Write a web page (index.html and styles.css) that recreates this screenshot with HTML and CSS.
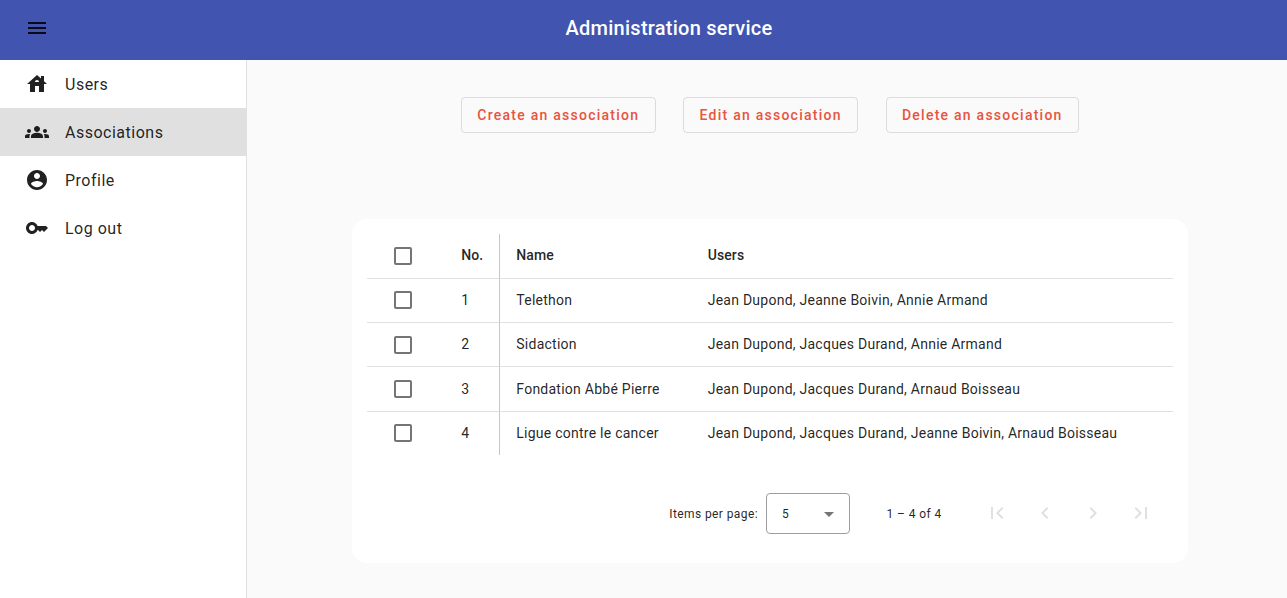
FILE: index.html
```
<!DOCTYPE html>
<html lang="en">
<head>
<meta charset="utf-8">
<title>Administration service</title>
<link rel="stylesheet" href="styles.css">
</head>
<body>
<header class="toolbar">
  <button class="menu-button" aria-label="Menu"><svg class="icon" viewBox="0 0 24 24"><path d="M3 18h18v-2H3v2zm0-5h18v-2H3v2zm0-7v2h18V6H3z"/></svg></button>
  <h1 class="title">Administration service</h1>
</header>
<div class="layout">
  <nav class="sidebar">
    <a class="nav-item"><svg class="icon" viewBox="0 0 24 24"><path d="M19 9.3V4h-3v2.6L12 3 2 12h3v8h5v-6h4v6h5v-8h3l-3-2.7zm-9 .7c0-1.1.9-2 2-2s2 .9 2 2h-4z"/></svg><span>Users</span></a>
    <a class="nav-item active"><svg class="icon" viewBox="0 0 24 24"><path d="M12 12.75c1.63 0 3.07.39 4.24.9 1.08.48 1.76 1.56 1.76 2.73V18H6v-1.61c0-1.18.68-2.26 1.76-2.73 1.17-.52 2.61-.91 4.24-.91zM4 13c1.1 0 2-.9 2-2s-.9-2-2-2-2 .9-2 2 .9 2 2 2zm1.13 1.1c-.37-.06-.74-.1-1.13-.1-.99 0-1.93.21-2.78.58C.48 14.9 0 15.62 0 16.43V18h4.5v-1.61c0-.83.23-1.61.63-2.29zM20 13c1.1 0 2-.9 2-2s-.9-2-2-2-2 .9-2 2 .9 2 2 2zm4 3.43c0-.81-.48-1.53-1.22-1.85-.85-.37-1.79-.58-2.78-.58-.39 0-.76.04-1.13.1.4.68.63 1.46.63 2.29V18H24v-1.57zM12 6c1.66 0 3 1.34 3 3s-1.34 3-3 3-3-1.34-3-3 1.34-3 3-3z"/></svg><span>Associations</span></a>
    <a class="nav-item"><svg class="icon" viewBox="0 0 24 24"><path d="M12 2C6.48 2 2 6.48 2 12s4.48 10 10 10 10-4.48 10-10S17.52 2 12 2zm0 3c1.66 0 3 1.34 3 3s-1.34 3-3 3-3-1.34-3-3 1.34-3 3-3zm0 14.2c-2.5 0-4.71-1.28-6-3.22.03-1.99 4-3.08 6-3.08 1.99 0 5.97 1.09 6 3.08-1.29 1.94-3.5 3.22-6 3.22z"/></svg><span>Profile</span></a>
    <a class="nav-item"><svg class="icon" viewBox="0 0 24 24"><path d="M21 10h-8.35C11.83 7.67 9.61 6 7 6c-3.31 0-6 2.69-6 6s2.69 6 6 6c2.61 0 4.83-1.67 5.65-4H13l2 2 2-2 2 2 4-4.04L21 10zM7 15c-1.65 0-3-1.35-3-3s1.35-3 3-3 3 1.35 3 3-1.35 3-3 3z"/></svg><span>Log out</span></a>
  </nav>
  <main class="content">
    <div class="actions">
      <button class="action">Create an association</button>
      <button class="action">Edit an association</button>
      <button class="action">Delete an association</button>
    </div>
    <section class="card">
      <table class="table">
        <thead>
          <tr><th class="col-check"><span class="checkbox"></span></th><th class="col-no">No.</th><th class="col-name">Name</th><th>Users</th></tr>
        </thead>
        <tbody>
          <tr><td class="col-check"><span class="checkbox"></span></td><td class="col-no">1</td><td>Telethon</td><td>Jean Dupond, Jeanne Boivin, Annie Armand</td></tr>
          <tr><td class="col-check"><span class="checkbox"></span></td><td class="col-no">2</td><td>Sidaction</td><td>Jean Dupond, Jacques Durand, Annie Armand</td></tr>
          <tr><td class="col-check"><span class="checkbox"></span></td><td class="col-no">3</td><td>Fondation Abbé Pierre</td><td>Jean Dupond, Jacques Durand, Arnaud Boisseau</td></tr>
          <tr><td class="col-check"><span class="checkbox"></span></td><td class="col-no">4</td><td>Ligue contre le cancer</td><td>Jean Dupond, Jacques Durand, Jeanne Boivin, Arnaud Boisseau</td></tr>
        </tbody>
      </table>
      <div class="paginator">
        <span class="label">Items per page:</span>
        <div class="select"><span>5</span><svg class="caret" viewBox="0 0 10 5"><path d="M0 0h10L5 5z"/></svg></div>
        <span class="label range">1 – 4 of 4</span>
        <div class="pager">
          <button class="page-button" aria-label="First page"><svg class="icon" viewBox="0 0 24 24"><path d="M18.41 16.59L13.82 12l4.59-4.59L17 6l-6 6 6 6zM6 6h2v12H6z"/></svg></button>
          <button class="page-button" aria-label="Previous page"><svg class="icon" viewBox="0 0 24 24"><path d="M15.41 7.41L14 6l-6 6 6 6 1.41-1.41L10.83 12z"/></svg></button>
          <button class="page-button" aria-label="Next page"><svg class="icon" viewBox="0 0 24 24"><path d="M10 6L8.59 7.41 13.17 12l-4.58 4.59L10 18l6-6z"/></svg></button>
          <button class="page-button" aria-label="Last page"><svg class="icon" viewBox="0 0 24 24"><path d="M5.59 7.41L10.18 12l-4.59 4.59L7 18l6-6-6-6zM16 6h2v12h-2z"/></svg></button>
        </div>
      </div>
    </section>
  </main>
</div>
</body>
</html>
```

FILE: styles.css
```
* { box-sizing: border-box; }
body {
  margin: 0;
  height: 598px;
  display: flex;
  flex-direction: column;
  overflow: hidden;
  background: #fafafa;
  color: rgba(0, 0, 0, .87);
  font-family: Roboto, sans-serif;
}
button { font-family: inherit; background: none; border: 0; padding: 0; margin: 0; }
.icon { display: block; width: 24px; height: 24px; fill: currentColor; }
.toolbar {
  display: flex;
  align-items: center;
  height: 60px;
  flex: none;
  padding: 0 0 4px 13px;
  background: #4054b0;
}
.menu-button {
  display: grid;
  place-items: center;
  width: 48px;
  height: 48px;
  color: rgba(0, 0, 0, .87);
}
.title {
  flex: 1;
  margin: 0;
  padding-right: 10px;
  text-align: center;
  color: #fff;
  font-size: 20px;
  font-weight: 500;
  line-height: 32px;
  letter-spacing: .25px;
}
.layout { display: flex; flex: 1; }
.sidebar { width: 247px; flex: none; background: #fff; border-right: 1px solid #e0e0e0; }
.nav-item {
  display: flex;
  align-items: center;
  gap: 16px;
  height: 48px;
  padding-left: 25px;
  font-size: 16px;
  letter-spacing: .5px;
}
.active { background: #e0e0e0; }
.content {
  flex: 1;
  display: flex;
  flex-direction: column;
  align-items: center;
  padding: 37px 0 0 6px;
}
.actions { display: flex; gap: 27.6px; }
.action {
  height: 36px;
  padding: 0 15.3px;
  border: 1px solid rgba(0, 0, 0, .12);
  border-radius: 4px;
  color: #e8543f;
  font-size: 14px;
  font-weight: 500;
  letter-spacing: 1.25px;
}
.card {
  width: 836px;
  height: 344px;
  margin-top: 86px;
  padding: 15px;
  border-radius: 15px;
  background: #fff;
}
.table {
  width: 100%;
  table-layout: fixed;
  border-collapse: separate;
  border-spacing: 0;
  font-size: 14px;
  line-height: 20px;
  letter-spacing: .25px;
}
tr { height: 44.3px; }
thead tr { height: 44.7px; }
tbody tr:last-child { height: 43.4px; }
th, td {
  padding: 0 16px .4px;
  text-align: left;
  font-weight: 400;
  white-space: nowrap;
  border-bottom: 1px solid #e0e0e0;
}
th { font-weight: 500; padding-bottom: 2px; letter-spacing: .1px; }
tbody tr:last-child td { border-bottom: 0; }
.col-check { width: 78.3px; padding: 0 0 0 27px; }
.col-no { width: 55px; border-right: 1px solid #c6c6c6; }
.col-name { width: 191.4px; }
.checkbox {
  display: block;
  width: 18px;
  height: 18px;
  border: 2px solid #757575;
  border-radius: 2px;
}
.paginator {
  display: flex;
  align-items: center;
  justify-content: flex-end;
  height: 56px;
  margin-top: 30px;
  padding-right: 8px;
  font-size: 12px;
  letter-spacing: .4px;
}
.label { padding-top: 2px; }
.select {
  display: flex;
  align-items: center;
  justify-content: space-between;
  width: 84px;
  height: 41px;
  margin: 1px 36.6px 0 8px;
  padding: 2px 15px 0 15px;
  border: 1px solid #9e9e9e;
  border-radius: 4px;
}
.caret { width: 10px; height: 5px; fill: #757575; }
.range { margin-right: 31.4px; }
.pager { display: flex; }
.page-button {
  display: grid;
  place-items: center;
  width: 48px;
  height: 48px;
  color: #e0e0e0;
}
```
